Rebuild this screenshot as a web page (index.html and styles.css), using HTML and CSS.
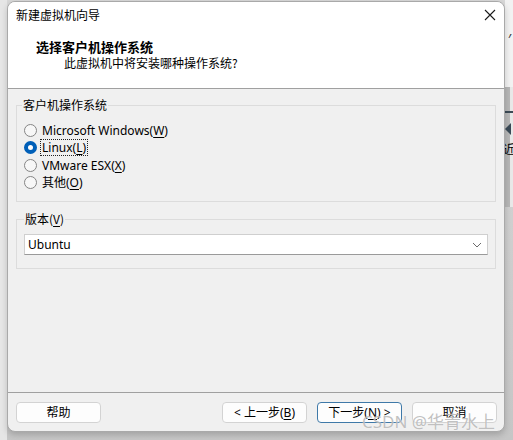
FILE: index.html
```html
<!DOCTYPE html>
<html lang="zh-CN">
<head>
<meta charset="utf-8">
<title>新建虚拟机向导</title>
<link rel="stylesheet" href="styles.css">
</head>
<body>
<div class="desk">
  <div class="window">
    <div class="titlebar">
      <span class="title">新建虚拟机向导</span>
      <svg class="close" width="12" height="12" viewBox="0 0 12 12"><path d="M1 1 L11 11 M11 1 L1 11" stroke="#1a1a1a" stroke-width="1.1" fill="none"/></svg>
    </div>
    <div class="header">
      <div class="heading">选择客户机操作系统</div>
      <div class="sub">此虚拟机中将安装哪种操作系统?</div>
    </div>
    <div class="body">
      <fieldset class="group group-os">
        <legend>客户机操作系统</legend>
        <div class="radio-row"><span class="radio"></span><span class="lbl">Microsoft Windows(<u>W</u>)</span></div>
        <div class="radio-row"><span class="radio checked"></span><span class="lbl focus">Linux(<u>L</u>)</span></div>
        <div class="radio-row"><span class="radio"></span><span class="lbl">VMware ESX(<u>X</u>)</span></div>
        <div class="radio-row"><span class="radio"></span><span class="lbl">其他(<u>O</u>)</span></div>
      </fieldset>
      <fieldset class="group group-ver">
        <legend>版本(<u>V</u>)</legend>
        <div class="select">
          <span>Ubuntu</span>
          <svg class="chev" width="10" height="6" viewBox="0 0 10 6"><path d="M1 1 L5 5 L9 1" stroke="#6b6b6b" stroke-width="1" fill="none"/></svg>
        </div>
      </fieldset>
    </div>
    <div class="footer">
      <button class="btn">帮助</button>
      <div class="btn-group">
        <button class="btn">&lt; 上一步(<u>B</u>)</button>
        <button class="btn default">下一步(<u>N</u>) &gt;</button>
        <button class="btn">取消</button>
      </div>
      <div class="watermark">CSDN @华青水上</div>
    </div>
  </div>
  <div class="strip">
    <div class="strip-top"><span class="mark">′</span></div>
    <div class="strip-band">
      <span class="dash"></span>
      <span class="arrow"></span>
      <span class="ch">近</span>
    </div>
  </div>
</div>
</body>
</html>
```
FILE: styles.css
```css
* { box-sizing: border-box; }
html, body { margin: 0; padding: 0; }
body {
  width: 513px;
  height: 440px;
  overflow: hidden;
  background: #d4d4d4;
  font-family: "Noto Sans", "Noto Sans CJK SC", sans-serif;
  font-size: 12px;
  color: #000;
}
.desk {
  display: flex;
  height: 440px;
  padding-left: 7px;
  background: linear-gradient(to right, #e6e6e6 0, #e6e6e6 7px, transparent 7px),
              linear-gradient(#d8d8d8, #c6c6c6);
}
.window {
  position: relative;
  width: 498px;
  height: 431px;
  margin-top: 1px;
  border: 1px solid #a9a9a9;
  border-radius: 8px;
  background: #f0f0f0;
  display: flex;
  flex-direction: column;
  overflow: hidden;
  box-shadow: 0 3px 6px rgba(0,0,0,0.18);
}
.titlebar {
  height: 26px;
  background: #fff;
  display: flex;
  align-items: center;
  justify-content: space-between;
  padding: 0 8px 0 8px;
  font-family: "Noto Sans CJK SC", sans-serif;
  line-height: 16px;
}
.header {
  background: #fff;
  padding: 10px 0 17px 28px;
  border-bottom: 1px solid #a0a0a0;
  font-family: "Noto Sans CJK SC", sans-serif;
}
.heading {
  font-size: 13px;
  font-weight: bold;
  line-height: 17px;
}
.sub {
  padding-left: 28px;
  line-height: 16px;
}
.body {
  flex: 1;
  padding: 8px 8px 0 8px;
}
.group {
  margin: 0;
  border: 1px solid #dcdcdc;
  min-inline-size: 0;
}
.group legend {
  padding: 0 1px;
  line-height: 16px;
  font-family: "Noto Sans CJK SC", sans-serif;
}
.group-os { padding: 9px 5px 10px 5px; }
.group-ver { margin-top: 9px; padding: 7px 7px 13px 7px; }
.radio-row {
  height: 17px;
  display: flex;
  align-items: center;
}
.radio-row:nth-child(4) { height: 18px; }
.radio {
  width: 13px;
  height: 13px;
  border-radius: 50%;
  border: 1px solid #858585;
  background: #f7f7f7;
  margin: 0 4px 0 2px;
  flex: none;
}
.radio.checked {
  border: 4px solid #005fb8;
  background: #fff;
}
.lbl {
  line-height: 15px;
  font-family: "Noto Sans", "Noto Sans CJK SC", sans-serif;
  padding: 0 1px;
}
.lbl.focus { outline: 1px dotted #222; outline-offset: 0; }
u { text-decoration-thickness: 1px; text-underline-offset: 2px; }
.select {
  height: 21px;
  background: #fff;
  border: 1px solid #cfcfcf;
  border-bottom-color: #9a9a9a;
  display: flex;
  align-items: center;
  justify-content: space-between;
  padding: 0 5px 0 3px;
  line-height: 15px;
}
.footer {
  position: relative;
  border-top: 1px solid #a0a0a0;
  padding: 9px 7px 8px 8px;
  display: flex;
  justify-content: space-between;
}
.btn-group { display: flex; gap: 10px; }
.btn {
  width: 85px;
  height: 21px;
  margin: 0;
  padding: 0;
  background: #fdfdfd;
  border: 1px solid #d3d3d3;
  border-radius: 4px;
  font-family: "Noto Sans", "Noto Sans CJK SC", sans-serif;
  font-size: 12px;
  line-height: 15px;
  color: #000;
}
.btn.default { border-color: #3f79a8; }
.watermark {
  position: absolute;
  left: 354px;
  top: 19px;
  font-family: "Noto Sans", "Noto Sans CJK SC", sans-serif;
  font-size: 17px;
  line-height: 20px;
  color: rgba(140,140,140,0.55);
  text-shadow: 0 0 1px rgba(255,255,255,0.9);
  white-space: nowrap;
}
.strip {
  width: 8px;
  overflow: hidden;
  display: flex;
  flex-direction: column;
}
.strip-top {
  height: 87px;
  background: #f2f2f2;
}
.mark {
  display: block;
  padding: 32px 0 0 3px;
  font-size: 14px;
  line-height: 14px;
  color: #333;
}
.strip-band {
  height: 120px;
  background: linear-gradient(to right, #b7b7b7 0, #b7b7b7 5px, #e8e8e8 5px);
  display: flex;
  flex-direction: column;
  padding-top: 24px;
}
.dash { display: block; width: 8px; height: 2px; background: #3c4a55; }
.arrow {
  display: block;
  width: 0; height: 0;
  margin-top: 10px;
  border-top: 6px solid transparent;
  border-bottom: 6px solid transparent;
  border-right: 6px solid #3b4a57;
}
.ch {
  margin-top: 6px;
  margin-left: -2px;
  font-family: "Noto Sans CJK SC", sans-serif;
  font-size: 12px;
  line-height: 16px;
  white-space: nowrap;
}
```
